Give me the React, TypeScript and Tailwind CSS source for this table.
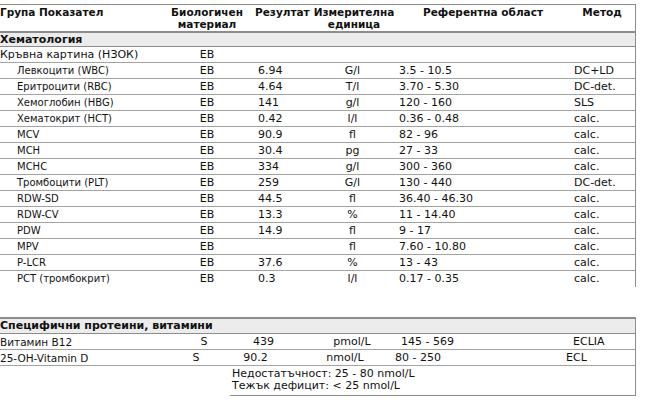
const font = { fontFamily: '"DejaVu Sans", Verdana, sans-serif' };

type Row = [string, string, string, string, string, string];

const blood: Row[] = [
  ["Левкоцити (WBC)", "EB", "6.94", "G/l", "3.5 - 10.5", "DC+LD"],
  ["Еритроцити (RBC)", "EB", "4.64", "T/l", "3.70 - 5.30", "DC-det."],
  ["Хемоглобин (HBG)", "EB", "141", "g/l", "120 - 160", "SLS"],
  ["Хематокрит (HCT)", "EB", "0.42", "l/l", "0.36 - 0.48", "calc."],
  ["MCV", "EB", "90.9", "fl", "82 - 96", "calc."],
  ["MCH", "EB", "30.4", "pg", "27 - 33", "calc."],
  ["MCHC", "EB", "334", "g/l", "300 - 360", "calc."],
  ["Тромбоцити (PLT)", "EB", "259", "G/l", "130 - 440", "DC-det."],
  ["RDW-SD", "EB", "44.5", "fl", "36.40 - 46.30", "calc."],
  ["RDW-CV", "EB", "13.3", "%", "11 - 14.40", "calc."],
  ["PDW", "EB", "14.9", "fl", "9 - 17", "calc."],
  ["MPV", "EB", "", "fl", "7.60 - 10.80", "calc."],
  ["P-LCR", "EB", "37.6", "%", "13 - 43", "calc."],
  ["PCT (тромбокрит)", "EB", "0.3", "l/l", "0.17 - 0.35", "calc."],
];

const cols = "grid grid-cols-[168px_78px_65px_86px_172px_1fr]";

function BloodRow({ row, last }: { row: Row; last: boolean }) {
  return (
    <div className={`${cols} h-[16px] items-center text-[11px] leading-[12px] ${last ? "" : "border-b border-[#a3a3a3]"}`}>
      <div className="pl-[17px] text-[10px] whitespace-nowrap">{row[0]}</div>
      <div className="text-center">{row[1]}</div>
      <div className="pl-[12px]">{row[2]}</div>
      <div className="text-center pr-[3px]">{row[3]}</div>
      <div className="pl-[2px] whitespace-nowrap">{row[4]}</div>
      <div className="pl-[5px] whitespace-nowrap">{row[5]}</div>
    </div>
  );
}

export default function App() {
  return (
    <div className="bg-white w-[648px] h-[402px] overflow-hidden text-[#111]" style={font}>
      {/* хематология */}
      <div className="mt-[4px] w-[636px] border-t border-r border-[#8c8c8c]">
        <div className={`${cols} h-[28px] border-b-2 border-[#8c8c8c] font-bold text-[10.5px] leading-[12px] pt-[1px] whitespace-nowrap`}>
          <div>Група Показател</div>
          <div className="text-center">
            Биологичен
            <br />
            материал
          </div>
          <div className="pl-[9px]">Резултат</div>
          <div className="text-center">
            Измерителна
            <br />
            единица
          </div>
          <div className="text-center">Референтна област</div>
          <div className="text-center">Метод</div>
        </div>
        <div className="h-[14px] bg-[#ececec] border-b border-[#8c8c8c] font-bold text-[11px] leading-[12px] flex items-center">
          Хематология
        </div>
        <div className={`${cols} h-[16px] items-center text-[11px] leading-[12px] border-b border-[#a3a3a3]`}>
          <div className="whitespace-nowrap">Кръвна картина (НЗОК)</div>
          <div className="text-center">EB</div>
        </div>
        {blood.map((r, i) => (
          <BloodRow key={r[0]} row={r} last={i === blood.length - 1} />
        ))}
      </div>

      {/* протеини */}
      <div className="mt-[30px] w-[636px] border-t-2 border-r border-[#8c8c8c] text-[11px] leading-[12px]">
        <div className="h-[15px] bg-[#ececec] border-b border-[#8c8c8c] font-bold flex items-center whitespace-nowrap">
          Специфични протеини, витамини
        </div>
        <div className="grid grid-cols-[184px_40px_79px_98px_172px_1fr] h-[16px] items-center border-b border-[#a3a3a3]">
          <div className="text-[10.5px] whitespace-nowrap">Витамин B12</div>
          <div className="text-center">S</div>
          <div className="text-center">439</div>
          <div className="text-center">pmol/L</div>
          <div>145 - 569</div>
          <div>ECLIA</div>
        </div>
        <div className="grid grid-cols-[176px_40px_79px_100px_171px_1fr] h-[16px] items-center border-b border-[#a3a3a3]">
          <div className="text-[10.5px] whitespace-nowrap">25-OH-Vitamin D</div>
          <div className="text-center">S</div>
          <div className="text-center">90.2</div>
          <div className="text-center">nmol/L</div>
          <div>80 - 250</div>
          <div>ECL</div>
        </div>
        <div className="flex h-[30px]">
          <div className="w-[230px]" />
          <div className="flex-1 border-b border-[#8c8c8c] pl-[2px] pt-[2px] whitespace-nowrap">
            <div>Недостатъчност: 25 - 80 nmol/L</div>
            <div>Тежък дефицит: &lt; 25 nmol/L</div>
          </div>
        </div>
      </div>
    </div>
  );
}
